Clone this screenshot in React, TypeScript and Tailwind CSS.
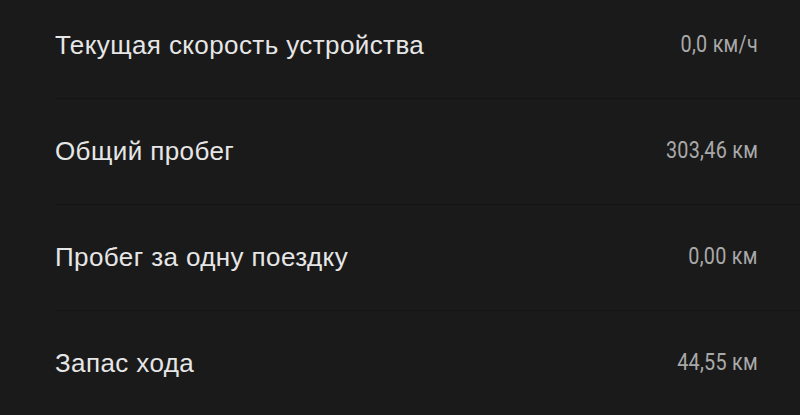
import React from 'react';

const rows = [
  { label: 'Текущая скорость устройства', value: '0,0 км/ч' },
  { label: 'Общий пробег', value: '303,46 км' },
  { label: 'Пробег за одну поездку', value: '0,00 км' },
  { label: 'Запас хода', value: '44,55 км' },
];

export default function App() {
  return (
    <div className="w-[800px] h-[415px] overflow-hidden bg-[#1a1a1a]">
      <div className="-mt-[7px] pl-[55px]">
        {rows.map((row) => (
          <div
            key={row.label}
            className="flex h-[106px] items-center justify-between border-b border-[#141414] pr-[42px]"
          >
            <span className="font-[Liberation_Sans] text-[26px] tracking-[0.4px] text-[#e6e6e6]">
              {row.label}
            </span>
            <span className="origin-right scale-x-[0.86] font-[Roboto] text-[23px] tracking-[0.3px] text-[#a9a9a9]">
              {row.value}
            </span>
          </div>
        ))}
      </div>
    </div>
  );
}
